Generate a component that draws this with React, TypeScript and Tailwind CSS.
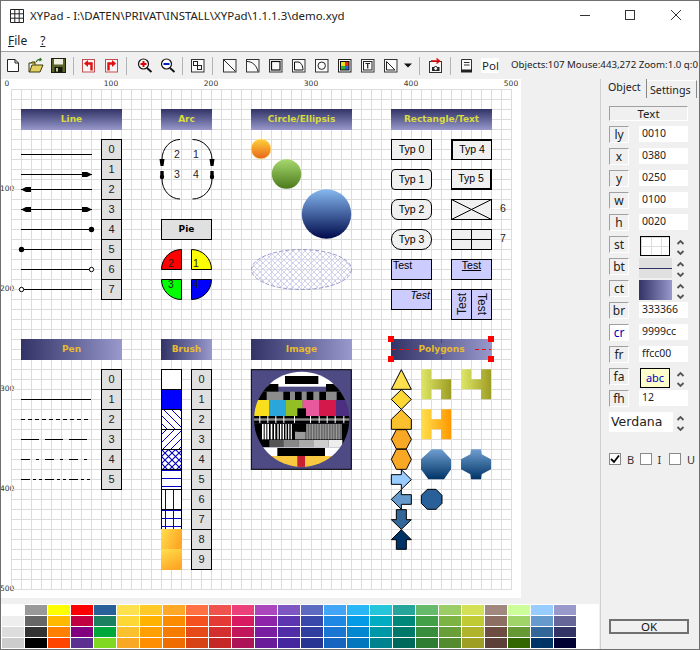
import React from "react";

const SANS = "font-['Noto_Sans',sans-serif]";
const ARIAL = "font-['Liberation_Sans',sans-serif]";
const VERD = "font-['DejaVu_Sans',sans-serif]";

type BoxProps = { x: number; y: number; w: number; h: number; className?: string; children?: React.ReactNode };
function Box({ x, y, w, h, className = "", children }: BoxProps) {
  return (
    <div className={`absolute flex items-center justify-center ${className}`} style={{ left: x, top: y, width: w, height: h }}>
      {children}
    </div>
  );
}

function Header({ x, y, w, label, horiz }: { x: number; y: number; w: number; label: string; horiz?: boolean }) {
  return (
    <Box
      x={x}
      y={y}
      w={w}
      h={21}
      className={`${VERD} pt-px text-[9px] font-bold ${horiz ? "bg-gradient-to-r from-[#333366] to-[#9999cc] text-[#e8bb30]" : "bg-gradient-to-b from-[#333366] to-[#9999cc] text-[#d8dc40]"}`}
    >
      {label}
    </Box>
  );
}

function NumCol({ x, y, n }: { x: number; y: number; n: number }) {
  return (
    <>
      {Array.from({ length: n }).map((_, i) => (
        <Box key={i} x={x} y={y + i * 20} w={21} h={21} className={`border border-black bg-[#e0e0e0] ${ARIAL} text-[11px] text-[#222]`}>
          {i}
        </Box>
      ))}
    </>
  );
}

function Canvas() {
  const typ: [string, number, number, string][] = [
    ["Typ 0", 380, 50, "border border-black"],
    ["Typ 1", 380, 80, "border border-black rounded-[4px]"],
    ["Typ 2", 380, 110, "border border-black rounded-[7px]"],
    ["Typ 3", 380, 140, "border border-black rounded-[10px]"],
    ["Typ 4", 440, 50, "border border-black border-l-2 border-t-2"],
    ["Typ 5", 440, 80, "border border-black border-r-2 border-b-2"],
  ];
  const barsA = [130, 165, 200, 238];
  const stripes = [66, 74, 82, 92, 102, 112, 120, 128, 136, 144, 152];
  const grayStripes = [200, 208, 216, 224, 232, 240, 248, 256, 264, 272, 280, 288, 296];
  return (
    <div className="absolute left-[10px] top-[10px] w-[501px] h-[501px] bg-[linear-gradient(#dcdcdc_1px,transparent_1px),linear-gradient(90deg,#dcdcdc_1px,transparent_1px)] bg-[size:10px_10px]">
      <svg className="absolute left-0 top-0" width="501" height="501" viewBox="0 0 501 501">
        <defs>
          <pattern id="hs" width="8" height="8" patternUnits="userSpaceOnUse">
            <path d="M-1 -1L9 9M-1 7L1 9M7 -1L9 1" stroke="#0000c0" strokeWidth="1" />
          </pattern>
          <pattern id="hb" width="8" height="8" patternUnits="userSpaceOnUse">
            <path d="M9 -1L-1 9M1 -1L-1 1M9 7L7 9" stroke="#0000c0" strokeWidth="1" />
          </pattern>
          <pattern id="hx" width="7" height="7" patternUnits="userSpaceOnUse">
            <path d="M-1 -1L8 8M8 -1L-1 8" stroke="#0000c0" strokeWidth="1.1" />
          </pattern>
          <pattern id="hh" width="8" height="8" patternUnits="userSpaceOnUse">
            <path d="M0 5.5H8" stroke="#0000c0" strokeWidth="1" />
          </pattern>
          <pattern id="hv" width="8" height="8" patternUnits="userSpaceOnUse">
            <path d="M2.5 0V8" stroke="#0000c0" strokeWidth="1" />
          </pattern>
          <pattern id="hc" width="8" height="8" patternUnits="userSpaceOnUse">
            <path d="M2.5 0V8M0 5.5H8" stroke="#0000c0" strokeWidth="1" />
          </pattern>
          <pattern id="ell" width="6" height="6" patternUnits="userSpaceOnUse">
            <path d="M-1 -1L7 7M7 -1L-1 7" stroke="#d2d2ee" strokeWidth="1" />
          </pattern>
          <linearGradient id="gO" x1="0" y1="0" x2="0" y2="1">
            <stop offset="0" stopColor="#ffd23a" />
            <stop offset="1" stopColor="#e5641c" />
          </linearGradient>
          <linearGradient id="gG" x1="0" y1="0" x2="0" y2="1">
            <stop offset="0" stopColor="#a6d86e" />
            <stop offset="1" stopColor="#4c7a1c" />
          </linearGradient>
          <linearGradient id="gB" x1="0" y1="0" x2="0" y2="1">
            <stop offset="0" stopColor="#86b8f0" />
            <stop offset="1" stopColor="#000a4c" />
          </linearGradient>
          <linearGradient id="g8" x1="0" y1="0" x2="1" y2="0.4">
            <stop offset="0" stopColor="#ffe14d" />
            <stop offset="1" stopColor="#ffa726" />
          </linearGradient>
          <linearGradient id="g9" x1="0" y1="0" x2="0.5" y2="1">
            <stop offset="0" stopColor="#ffe14d" />
            <stop offset="1" stopColor="#ffa726" />
          </linearGradient>
          <linearGradient id="gL" x1="0" y1="0" x2="1" y2="0">
            <stop offset="0" stopColor="#dfe866" />
            <stop offset="1" stopColor="#9e9d24" />
          </linearGradient>
          <linearGradient id="gY" x1="0" y1="0" x2="1" y2="0">
            <stop offset="0" stopColor="#ffe14d" />
            <stop offset="1" stopColor="#ff9800" />
          </linearGradient>
          <linearGradient id="gN" x1="0" y1="0" x2="0" y2="1">
            <stop offset="0" stopColor="#6f9fd0" />
            <stop offset="1" stopColor="#003366" />
          </linearGradient>
          <clipPath id="tv">
            <circle cx="185" cy="268" r="143" />
          </clipPath>
        </defs>

        {/* Line group */}
        <g stroke="#000" strokeWidth="1" fill="none">
          {[65, 85, 100, 120, 140, 160, 180, 200].map((y) => (
            <path key={y} d={`M10 ${y + 0.5}H81`} />
          ))}
        </g>
        <g fill="#000">
          <path d="M71 83H76L81 85.5L76 88H71Z" />
          <path d="M20 98H15L10 100.5L15 103H20Z" />
          <path d="M71 118H76L81 120.5L76 123H71Z" />
          <path d="M20 118H15L10 120.5L15 123H20Z" />
          <circle cx="80.5" cy="140.5" r="2.7" />
          <circle cx="10.5" cy="160.5" r="2.7" />
        </g>
        <circle cx="80.5" cy="180.5" r="2.2" fill="#fff" stroke="#000" />
        <circle cx="10.5" cy="200.5" r="2.2" fill="#fff" stroke="#000" />

        {/* Arc group */}
        <g stroke="#000" fill="none">
          <path d="M181.5 50.5A19.5 20 0 0 1 201 70" />
          <path d="M201 90A19.5 20 0 0 1 181.5 110" />
          <path d="M169 50.5A18 20 0 0 0 151 70" />
          <path d="M151 90A18 20 0 0 0 169 110" />
        </g>
        <g fill="#000">
          <path d="M198.5 70H203.5L202.5 77H199.5Z" />
          <path d="M199.3 82H202.7V89H199.3Z" />
          <circle cx="201" cy="88" r="2.2" />
          <path d="M148.5 70H153.5L152.5 77H149.5Z" />
          <path d="M149.3 82H152.7V89H149.3Z" />
          <circle cx="151" cy="88" r="2.2" />
        </g>

        {/* Pie group */}
        <g stroke="#000">
          <path d="M170.5 180.5H150.5A20 20 0 0 1 170.5 160.5Z" fill="#ff0000" />
          <path d="M180.5 180.5V160.5A20 20 0 0 1 200.5 180.5Z" fill="#ffff00" />
          <path d="M170.5 190.5V210.5A20 20 0 0 1 150.5 190.5Z" fill="#00ff00" />
          <path d="M180.5 190.5H200.5A20 20 0 0 1 180.5 210.5Z" fill="#0000ff" />
        </g>

        {/* Circles */}
        <circle cx="250" cy="60" r="10" fill="url(#gO)" stroke="#ffe080" strokeWidth="0.8" />
        <circle cx="275.5" cy="85" r="14.7" fill="url(#gG)" />
        <circle cx="315.5" cy="125" r="24.7" fill="url(#gB)" />
        <ellipse cx="290.5" cy="180.5" rx="50" ry="20" fill="url(#ell)" stroke="#9999cc" strokeDasharray="4 2" />

        {/* Rect cells */}
        <g stroke="#000" fill="#f0f0f0">
          <rect x="440.5" y="110.5" width="40" height="20" />
          <path d="M440.5 110.5L480.5 130.5M480.5 110.5L440.5 130.5" fill="none" />
          <rect x="440.5" y="140.5" width="40" height="20" />
          <path d="M460.5 140.5V160.5M440.5 150.5H480.5" fill="none" />
        </g>

        {/* Pen lines */}
        <g stroke="#000" fill="none">
          <path d="M10 310.5H80" />
          <path d="M10 330.5H80" strokeDasharray="4 3" />
          <path d="M10 350.5H76" strokeDasharray="18 6" />
          <path d="M10 370.5H76" strokeDasharray="9 6 3 6" />
          <path d="M10 390.5H80" strokeDasharray="9 3 3 3 3 3" />
        </g>

        {/* Brush cells */}
        <g stroke="#000">
          <rect x="150.5" y="280.5" width="20" height="20" fill="#fff" />
          <rect x="150.5" y="300.5" width="20" height="20" fill="#0000ff" />
          <rect x="150.5" y="320.5" width="20" height="20" fill="#fff" />
          <rect x="150.5" y="320.5" width="20" height="20" fill="url(#hs)" />
          <rect x="150.5" y="340.5" width="20" height="20" fill="#fff" />
          <rect x="150.5" y="340.5" width="20" height="20" fill="url(#hb)" />
          <rect x="150.5" y="360.5" width="20" height="20" fill="#fff" />
          <rect x="150.5" y="360.5" width="20" height="20" fill="url(#hx)" />
          <rect x="150.5" y="380.5" width="20" height="20" fill="#fff" />
          <rect x="150.5" y="380.5" width="20" height="20" fill="url(#hh)" />
          <rect x="150.5" y="400.5" width="20" height="20" fill="#fff" />
          <rect x="150.5" y="400.5" width="20" height="20" fill="url(#hv)" />
          <rect x="150.5" y="420.5" width="20" height="20" fill="#fff" />
          <rect x="150.5" y="420.5" width="20" height="20" fill="url(#hc)" />
        </g>
        <rect x="150" y="440" width="21" height="20" fill="url(#g8)" />
        <rect x="150" y="460" width="21" height="21" fill="url(#g9)" />

        {/* Test card and polygons in reference-crop units */}
        <g transform="translate(229 241) scale(0.33333)">
          <rect x="34" y="119" width="300" height="299" fill="#4d4a84" stroke="#000" strokeWidth="3" />
          <g clipPath="url(#tv)">
            <rect x="30" y="120" width="310" height="50" fill="#fff" />
            <rect x="135" y="138" width="100" height="24" fill="#000" />
            <rect x="30" y="162" width="85" height="24" fill="#000" />
            <rect x="258" y="162" width="80" height="24" fill="#000" />
            <rect x="30" y="185" width="310" height="25" fill="#8c8c8c" />
            {barsA.map((x) => (
              <rect key={x} x={x} y="185" width="20" height="25" fill="#000" />
            ))}
            <rect x="30" y="185" width="50" height="25" fill="#000" />
            <rect x="290" y="185" width="50" height="25" fill="#000" />
            <rect x="30" y="210" width="58" height="48" fill="#f8de1c" />
            <rect x="88" y="210" width="50" height="48" fill="#2aa6dc" />
            <rect x="138" y="210" width="50" height="48" fill="#94bf24" />
            <rect x="188" y="210" width="50" height="48" fill="#e8589c" />
            <rect x="238" y="210" width="50" height="48" fill="#d4184c" />
            <rect x="288" y="210" width="50" height="48" fill="#4c2f80" />
            <rect x="172" y="235" width="26" height="25" fill="#000" />
            <rect x="30" y="258" width="310" height="22" fill="#000" />
            <rect x="30" y="265" width="310" height="7" fill="#8c8c8c" />
            {[58, 82, 106, 130, 162, 210, 236, 260, 284, 310].map((x) => (
              <rect key={x} x={x} y="258" width="3" height="22" fill="#fff" />
            ))}
            <rect x="30" y="280" width="310" height="50" fill="#000" />
            {stripes.map((x, i) => (
              <rect key={x} x={x} y="282" width={i < 4 ? 5 : 4} height="46" fill={i < 8 ? "#fff" : "#ddd"} />
            ))}
            <rect x="165" y="305" width="32" height="23" fill="#9a9a9a" />
            <rect x="172" y="280" width="26" height="25" fill="#000" />
            <rect x="198" y="282" width="108" height="46" fill="#6a6a6a" />
            {grayStripes.map((x) => (
              <rect key={x} x={x} y="282" width="3" height="46" fill="#9c9c9c" />
            ))}
            <rect x="30" y="330" width="310" height="22" fill="#000" />
            <rect x="88" y="330" width="42" height="22" fill="#555" />
            <rect x="130" y="330" width="45" height="22" fill="#888" />
            <rect x="175" y="330" width="47" height="22" fill="#aaa" />
            <rect x="222" y="330" width="43" height="22" fill="#ccc" />
            <rect x="265" y="330" width="42" height="22" fill="#eee" />
            <rect x="30" y="352" width="310" height="26" fill="#fff" />
            <rect x="112" y="354" width="143" height="24" fill="#000" />
            <rect x="30" y="378" width="310" height="36" fill="#f8c840" />
            <rect x="172" y="378" width="23" height="36" fill="#c81e32" />
          </g>

          <g stroke="#000" strokeWidth="3">
            <path d="M484 119L514 178H454Z" fill="#ffe14d" />
            <path d="M484 179L514 208L484 238L454 208Z" fill="#fdd835" />
            <path d="M484 239L514 268V298H454V268Z" fill="#fbc02d" />
            <path d="M469 299H499L514 328L499 357H469L454 328Z" fill="#f9a825" />
            <path d="M469 358H499L514 388L499 418H469L454 388Z" fill="#f9a825" />
            <path d="M484 419L514 449L484 478V463H454V434H484Z" fill="#99ccff" />
            <path d="M484 479V494H514V523H484V538L454 508Z" fill="#6699cc" />
            <path d="M469 539H499V569H514L484 598L454 569H469Z" fill="#336699" />
            <path d="M484 599L514 629H499V658H469V629H454Z" fill="#003366" />
            <path d="M562 478H588L606 496V520L588 538H562L544 520V496Z" fill="#2a6099" />
          </g>
          <path d="M543 118H573V148H633V208H603V178H573V208H543Z" fill="url(#gL)" />
          <path d="M663 118H693V148H723V118H753V208H723V178H663Z" fill="url(#gL)" />
          <path d="M543 238H573V268H603V238H633V328H603V298H573V328H543Z" fill="url(#gY)" />
          <path d="M575 358H605L633 388V418L612 448H565L543 418V388Z" fill="url(#gN)" />
          <path d="M693 358H723L725 373L753 388V418L725 433L723 448H693L691 433L663 418V388L691 373Z" fill="url(#gN)" />
        </g>
      </svg>

      <Header x={10} y={20} w={101} label="Line" />
      <Header x={150} y={20} w={51} label="Arc" />
      <Header x={240} y={20} w={101} label="Circle/Ellipsis" />
      <Header x={380} y={20} w={101} label="Rectangle/Text" />
      <Header x={10} y={250} w={101} label="Pen" horiz />
      <Header x={150} y={250} w={51} label="Brush" horiz />
      <Header x={240} y={250} w={101} label="Image" horiz />
      <Header x={380} y={250} w={101} label="Polygons" horiz />

      {/* Selection of the Polygons header; the dashes stop short of its text */}
      <svg className="absolute left-0 top-0 pointer-events-none" width="501" height="501" viewBox="0 0 501 501">
        <path d="M381 260.5H408M464 260.5H480M430.5 250V255M430.5 266V270" stroke="#ff0000" strokeDasharray="4 3" fill="none" />
      </svg>

      {[
        [377, 247],
        [477, 247],
        [377, 267],
        [477, 267],
      ].map(([x, y]) => (
        <div key={`${x}-${y}`} className="absolute bg-[#ff0000]" style={{ left: x, top: y, width: 6, height: 6 }} />
      ))}

      <NumCol x={90} y={50} n={8} />
      <NumCol x={90} y={280} n={6} />
      <NumCol x={180} y={280} n={10} />

      <Box x={160} y={60} w={12} h={12} className={`${ARIAL} text-[10.5px] text-[#222]`}>2</Box>
      <Box x={179} y={60} w={12} h={12} className={`${ARIAL} text-[10.5px] text-[#222]`}>1</Box>
      <Box x={160} y={80} w={12} h={12} className={`${ARIAL} text-[10.5px] text-[#222]`}>3</Box>
      <Box x={179} y={80} w={12} h={12} className={`${ARIAL} text-[10.5px] text-[#222]`}>4</Box>

      <Box x={150} y={130} w={51} h={21} className={`border border-black bg-[#e0e0e0] ${VERD} text-[9px] font-bold text-black`}>Pie</Box>

      <Box x={154} y={169} w={12} h={12} className={`${ARIAL} text-[10.5px] text-[#222]`}>2</Box>
      <Box x={179} y={169} w={12} h={12} className={`${ARIAL} text-[10.5px] text-[#222]`}>1</Box>
      <Box x={154} y={190} w={12} h={12} className={`${ARIAL} text-[10.5px] text-[#222]`}>3</Box>
      <Box x={179} y={190} w={12} h={12} className={`${ARIAL} text-[10.5px] text-[#222]`}>4</Box>

      {typ.map(([t, x, y, c]) => (
        <Box key={t} x={x} y={y} w={41} h={21} className={`bg-[#f0f0f0] ${c} ${ARIAL} text-[10.5px] text-black`}>{t}</Box>
      ))}
      <Box x={487} y={114} w={10} h={12} className={`${ARIAL} text-[10.5px] text-[#222]`}>6</Box>
      <Box x={487} y={144} w={10} h={12} className={`${ARIAL} text-[10.5px] text-[#222]`}>7</Box>

      <Box x={380} y={170} w={41} h={21} className={`border border-black bg-[#ccccff] !items-start !justify-start pl-px ${ARIAL} text-[10.5px] leading-[11px] text-black`}>Test</Box>
      <Box x={440} y={170} w={41} h={21} className={`border border-black bg-[#ccccff] !items-start ${ARIAL} text-[10.5px] leading-[11px] text-black underline`}>Test</Box>
      <Box x={380} y={200} w={41} h={21} className={`border border-black bg-[#ccccff] !items-start !justify-end pr-px ${ARIAL} text-[10.5px] leading-[11px] text-black italic`}>Test</Box>
      <Box x={440} y={200} w={21} h={31} className={`border border-black bg-[#ccccff] ${ARIAL} text-[12px] leading-none text-[#111]`}>
        <span className="[writing-mode:vertical-rl] rotate-180">Test</span>
      </Box>
      <Box x={460} y={200} w={21} h={31} className={`border border-black bg-[#ccccff] ${ARIAL} text-[12px] leading-none text-[#111]`}>
        <span className="[writing-mode:vertical-rl]">Test</span>
      </Box>
    </div>
  );
}

const palette: string[][] = [
  ["#ffffff", "#eeeeee", "#dddddd", "#cccccc"],
  ["#999999", "#666666", "#333333", "#000000"],
  ["#ffff00", "#ffb900", "#ff8000", "#ff4500"],
  ["#ff0000", "#c00040", "#800080", "#5c3090"],
  ["#2a6099", "#1a8060", "#00a83c", "#80d820"],
  ["#ffe14d", "#fdd835", "#fbc02d", "#f9a825"],
  ["#ffca28", "#ffb300", "#ffa000", "#ff8f00"],
  ["#ffa726", "#fb8c00", "#f57c00", "#ef6c00"],
  ["#ff7043", "#f4511e", "#e64a19", "#d84315"],
  ["#ef5350", "#e53935", "#d32f2f", "#c62828"],
  ["#ec407a", "#d81b60", "#c2185b", "#ad1457"],
  ["#ab47bc", "#8e24aa", "#7b1fa2", "#6a1b9a"],
  ["#7e57c2", "#5e35b1", "#512da8", "#4527a0"],
  ["#5c6bc0", "#3949ab", "#303f9f", "#283593"],
  ["#42a5f5", "#1e88e5", "#1976d2", "#1565c0"],
  ["#29b6f6", "#039be5", "#0288d1", "#0277bd"],
  ["#26c6da", "#00acc1", "#0097a7", "#00838f"],
  ["#26a69a", "#00897b", "#00796b", "#00695c"],
  ["#66bb6a", "#43a047", "#388e3c", "#2e7d32"],
  ["#9ccc65", "#7cb342", "#689f38", "#558b2f"],
  ["#d4e157", "#c0ca33", "#afb42b", "#9e9d24"],
  ["#a1887f", "#8d6e63", "#6d4c41", "#5d4037"],
  ["#ccff99", "#a0d468", "#669933", "#336600"],
  ["#99ccff", "#6699cc", "#336699", "#003366"],
  ["#9999cc", "#666699", "#333366", "#000033"],
];

function Palette() {
  const cells: string[] = [];
  for (let r = 0; r < 4; r++) for (let c = 0; c < 25; c++) cells.push(palette[c][r]);
  return (
    <div className="h-[45px] w-[598px] bg-white pl-px pt-px">
      <div className="grid grid-cols-[repeat(25,22px)] auto-rows-[10px] gap-px">
        {cells.map((c, i) => (
          <div key={i} style={{ background: c }} />
        ))}
      </div>
    </div>
  );
}

function Sep({ className = "" }: { className?: string }) {
  return <div className={`w-px h-[18px] bg-[#b4b4b4] shrink-0 ${className}`} />;
}

function Icon({ children, className = "" }: { children: React.ReactNode; className?: string }) {
  return (
    <svg width="23" height="23" viewBox="0 0 23 23" className={`shrink-0 ${className}`} fill="none">
      {children}
    </svg>
  );
}

function ToolBox({ children, className = "" }: { children: React.ReactNode; className?: string }) {
  return (
    <Icon className={className}>
      <rect x="5.5" y="5.5" width="12.5" height="12.5" fill="#fafafa" stroke="#333" />
      {children}
    </Icon>
  );
}

function Toolbar() {
  return (
    <div className="flex items-center h-[27px] bg-[#f0f0f0] relative">
      <Icon>
        <path d="M6.5 5.5H14L17.5 9V17.5H6.5Z" fill="#fff" stroke="#222" />
        <path d="M14 5.5V9H17.5" stroke="#222" />
      </Icon>
      <Icon>
        <path d="M5 9V18H16L19 11H8L5.5 18" fill="#e4d060" stroke="#3c3c10" />
        <path d="M5 9H7L8 8H11V11" stroke="#3c3c10" fill="#a8a030" />
        <path d="M12 8C13 6 15 5 17 5.5L16 4M17 5.5L15.5 7" stroke="#2c6e1e" strokeWidth="1.2" />
      </Icon>
      <Icon>
        <rect x="4.5" y="4.5" width="14" height="14" fill="#5a6428" stroke="#1c2008" />
        <rect x="7" y="5" width="9" height="5.5" fill="#f0f0e0" />
        <rect x="7.5" y="13" width="8" height="5.5" fill="#14180a" />
        <rect x="9" y="14" width="2" height="3.5" fill="#c8c8a0" />
      </Icon>
      <Sep className="mx-[3px]" />
      <Icon>
        <rect x="5.5" y="5.5" width="12" height="12.5" fill="#f8f4f4" stroke="#c05050" />
        <path d="M7 9.5L11 6V13Z" fill="#e01010" />
        <path d="M10.5 9.5H14.5V16.5" stroke="#e01010" strokeWidth="2.4" />
      </Icon>
      <Icon>
        <rect x="5.5" y="5.5" width="12" height="12.5" fill="#f8f4f4" stroke="#c05050" />
        <path d="M16 9.5L12 6V13Z" fill="#e01010" />
        <path d="M12.5 9.5H8.5V16.5" stroke="#e01010" strokeWidth="2.4" />
      </Icon>
      <Sep className="mx-[3px]" />
      <Icon className="ml-[3px]">
        <circle cx="10.5" cy="10" r="5" fill="#fff" stroke="#111" strokeWidth="1.2" />
        <path d="M7.5 10H13.5M10.5 7V13" stroke="#e00000" strokeWidth="2" />
        <path d="M14 14L18.5 18" stroke="#111" strokeWidth="1.8" />
      </Icon>
      <Icon>
        <circle cx="10.5" cy="10" r="5" fill="#fff" stroke="#111" strokeWidth="1.2" />
        <path d="M7.5 10H13.5" stroke="#0020c0" strokeWidth="2" />
        <path d="M14 14L18.5 18" stroke="#111" strokeWidth="1.8" />
      </Icon>
      <Sep className="mx-[3px]" />
      <ToolBox>
        <rect x="7.5" y="7.5" width="4" height="4" stroke="#222" />
        <rect x="11.5" y="11.5" width="4" height="4" stroke="#222" />
      </ToolBox>
      <Sep className="mx-[3px]" />
      <ToolBox className="ml-[2px]">
        <path d="M6 6L17.5 17.5" stroke="#222" />
      </ToolBox>
      <ToolBox>
        <path d="M6 7.5C11 7.5 15.5 11 17 17.5" stroke="#222" />
      </ToolBox>
      <ToolBox>
        <rect x="7.5" y="7.5" width="8.5" height="8.5" stroke="#111" strokeWidth="1.2" />
      </ToolBox>
      <ToolBox>
        <path d="M7.5 8H11C14 8 16 12 16 16H7.5Z" stroke="#111" />
      </ToolBox>
      <ToolBox>
        <circle cx="11.7" cy="11.7" r="3.7" stroke="#222" />
      </ToolBox>
      <Icon>
        <rect x="5.5" y="5.5" width="12.5" height="12.5" fill="#fafafa" stroke="#222" />
        <rect x="7" y="7" width="9.5" height="9.5" fill="#111" />
        <rect x="8" y="8" width="4" height="4" fill="#f0e020" />
        <rect x="12" y="8" width="3.5" height="4" fill="#e03020" />
        <rect x="8" y="12" width="4" height="3.5" fill="#30b030" />
        <rect x="12" y="12" width="3.5" height="3.5" fill="#3060e0" />
      </Icon>
      <ToolBox>
        <rect x="7.5" y="7.5" width="8.5" height="8.5" stroke="#222" />
        <path d="M9.5 9.5H14M11.7 9.5V14.5" stroke="#222" strokeWidth="1.2" />
      </ToolBox>
      <ToolBox>
        <path d="M7.5 7.5V16H16Z" stroke="#222" />
      </ToolBox>
      <svg width="10" height="23" viewBox="0 0 10 23" className="ml-[1px] shrink-0">
        <path d="M1 9.5H9L5 13.5Z" fill="#111" />
      </svg>
      <Sep className="ml-[6px] mr-[4px]" />
      <Icon>
        <rect x="5.5" y="7.5" width="12" height="11" fill="#f5f5f5" stroke="#333" />
        <rect x="8" y="13" width="7.5" height="4" fill="#222" />
        <circle cx="11.7" cy="14.5" r="2" fill="#f5f5f5" stroke="#222" />
        <path d="M7 7H15M12.5 4.5L15.5 7L12.5 9.5" stroke="#e00000" strokeWidth="1.3" />
      </Icon>
      <Sep className="ml-[3px] mr-[4px]" />
      <Icon>
        <path d="M6.5 5.5H16.5V17.5H6.5Z" fill="#fafafa" stroke="#333" />
        <path d="M9 8.5H14.5M9 11H14.5" stroke="#333" />
        <rect x="6" y="15.5" width="11" height="3" fill="#222" />
      </Icon>
      <div className={`ml-[3px] w-[18px] h-[15px] bg-white ${SANS} text-[11.5px] leading-[15px] text-[#222] overflow-hidden pl-px`}>Pol</div>
      <div className={`ml-[12px] whitespace-nowrap ${SANS} text-[9.7px] text-[#222]`}>Objects:107 Mouse:443,272 Zoom:1.0 q:0</div>
    </div>
  );
}

function Spin() {
  return (
    <svg width="9" height="19" viewBox="0 0 9 19" className="shrink-0 mt-[2px]" fill="none">
      <path d="M1.5 6L4.5 3L7.5 6" stroke="#555" strokeWidth="1.8" />
      <path d="M1.5 13L4.5 16L7.5 13" stroke="#555" strokeWidth="1.8" />
    </svg>
  );
}

function Label({ t, blue }: { t: string; blue?: boolean }) {
  return (
    <div
      className={`w-[20px] h-[17px] shrink-0 flex items-center justify-center border-l border-t border-l-[#a0a0a0] border-t-[#a0a0a0] border-r border-b border-r-white border-b-white ${SANS} text-[12px] leading-none ${blue ? "bg-white text-[#0000c0]" : "text-[#222]"}`}
    >
      {t}
    </div>
  );
}

function FieldRow({ t, v, blue }: { t: string; v: string; blue?: boolean }) {
  return (
    <div className="flex h-[22px]">
      <Label t={t} blue={blue} />
      <div className={`ml-[10px] w-[49px] h-[16px] bg-white pl-[3px] ${SANS} text-[10.5px] leading-[14px] text-[#222]`}>{v}</div>
    </div>
  );
}

function Check({ label, checked, className = "" }: { label: string; checked?: boolean; className?: string }) {
  return (
    <div className={`flex items-center ${className}`}>
      <div className="w-[12px] h-[12px] bg-white border border-[#8a8a8a]">
        {checked && (
          <svg width="10" height="10" viewBox="0 0 10 10" fill="none">
            <path d="M1 5L4 8L9 1.5" stroke="#000" strokeWidth="1.8" />
          </svg>
        )}
      </div>
      <span className={`ml-[6px] w-[12px] ${SANS} text-[11px] leading-none text-[#333]`}>{label}</span>
    </div>
  );
}

function RightPanel() {
  return (
    <div className="w-[99px] h-full border-l border-[#cfcfcf] bg-[#f0f0f0] pl-[8px] flex flex-col relative">
      <div className="flex h-[19px] -ml-[3px] items-start">
        <div className={`w-[41px] h-[19px] border-r border-[#888] ${SANS} text-[10.7px] leading-[17px] pl-[2px] text-[#222]`}>Object</div>
        <div className={`w-[50px] h-[18px] mt-px border-r border-[#888] border-t border-t-white ${SANS} text-[10.7px] leading-[18px] pl-[3px] text-[#222]`}>Settings</div>
      </div>
      <div className={`mt-[8px] w-[79px] h-[15px] flex items-center justify-center border-l border-t border-l-[#a0a0a0] border-t-[#a0a0a0] border-r border-b border-r-white border-b-white ${SANS} text-[11.5px] leading-none text-[#222]`}>Text</div>
      <div className="mt-[5px]">
        <FieldRow t="ly" v="0010" />
        <FieldRow t="x" v="0380" />
        <FieldRow t="y" v="0250" />
        <FieldRow t="w" v="0100" />
        <FieldRow t="h" v="0020" />
        <div className="flex h-[22px]">
          <Label t="st" />
          <div className="ml-[11px] w-[30px] h-[20px] border border-black bg-white bg-[linear-gradient(#dcdcdc_1px,transparent_1px),linear-gradient(90deg,#dcdcdc_1px,transparent_1px)] bg-[size:10px_9px]" />
          <div className="ml-[6px]"><Spin /></div>
        </div>
        <div className="flex h-[22px]">
          <Label t="bt" />
          <div className="ml-[10px] w-[33px] h-[20px] bg-[#e0e0e0] flex items-center"><div className="w-full h-px bg-[#333366]" /></div>
          <div className="ml-[4px]"><Spin /></div>
        </div>
        <div className="flex h-[22px]">
          <Label t="ct" />
          <div className="ml-[10px] w-[33px] h-[20px] bg-gradient-to-r from-[#333366] to-[#9999cc]" />
          <div className="ml-[4px]"><Spin /></div>
        </div>
        <FieldRow t="br" v="333366" />
        <FieldRow t="cr" v="9999cc" blue />
        <FieldRow t="fr" v="ffcc00" />
        <div className="flex h-[22px]">
          <Label t="fa" />
          <div className={`ml-[11px] w-[30px] h-[20px] border border-black bg-[#ffffcc] flex items-center justify-center ${SANS} text-[11px] text-[#0000c0]`}>abc</div>
          <div className="ml-[6px]"><Spin /></div>
        </div>
        <FieldRow t="fh" v="12" />
      </div>
      <div className="flex h-[20px]">
        <div className={`w-[64px] h-[20px] bg-white pl-[2px] ${VERD} text-[12.5px] leading-[20px] text-[#222]`}>Verdana</div>
        <div className="ml-[3px]"><Spin /></div>
      </div>
      <div className="mt-[21px] flex">
        <Check label="B" checked className="w-[31px]" />
        <Check label="I" className="w-[29px]" />
        <Check label="U" />
      </div>
      <div className={`mt-auto mb-[15px] w-[80px] h-[15px] border-2 border-[#707070] bg-[#f0f0f0] flex items-center justify-center ${SANS} text-[11.5px] leading-none text-[#111]`}>OK</div>
    </div>
  );
}

export default function App() {
  const xRuler = [0, 100, 200, 300, 400, 500];
  const yRuler = [100, 200, 300, 400, 500];
  return (
    <div className="w-[700px] h-[650px] bg-[#f0f0f0] border border-[#707070] flex flex-col overflow-hidden">
      <div className="h-[29px] bg-white flex items-center shrink-0">
        <svg width="14" height="14" viewBox="0 0 14 14" className="ml-[9px] shrink-0" fill="none">
          <path d="M.5 .5H13.5V13.5H.5ZM4.8 .5V13.5M9.2 .5V13.5M.5 4.8H13.5M.5 9.2H13.5" stroke="#222" />
        </svg>
        <div className={`ml-[6px] whitespace-nowrap ${SANS} text-[11.45px] text-[#222]`}>{"XYPad - I:\\DATEN\\PRIVAT\\INSTALL\\XYPad\\1.1.1.3\\demo.xyd"}</div>
        <div className="ml-auto flex items-center">
          <svg width="46" height="29" viewBox="0 0 46 29" fill="none"><path d="M1 14.5H11" stroke="#333" /></svg>
          <svg width="46" height="29" viewBox="0 0 46 29" fill="none"><rect x="0.5" y="9.5" width="9" height="9" stroke="#333" /></svg>
          <svg width="28" height="29" viewBox="0 0 28 29" fill="none"><path d="M0 9L10 19M10 9L0 19" stroke="#333" /></svg>
        </div>
      </div>
      <div className={`h-[21px] bg-white flex items-center shrink-0 ${SANS} text-[12px] text-[#222]`}>
        <span className="ml-[7px]"><span className="underline">F</span>ile</span>
        <span className="ml-[13px] underline">?</span>
      </div>
      <div className="h-px bg-[#a0a0a0] shrink-0" />
      <Toolbar />
      <div className="flex flex-1 min-h-0">
        <div className="w-[599px] flex flex-col">
          <div className="relative w-[520px] h-[519px] bg-white overflow-hidden">
            {xRuler.map((v) => (
              <span key={v} className={`absolute top-0 -translate-x-1/2 ${VERD} text-[7.5px] leading-[10px] text-[#333]`} style={{ left: v + (v ? 10 : 6) }}>{v}</span>
            ))}
            {yRuler.map((v) => (
              <span key={v} className={`absolute -left-[1px] ${VERD} text-[7.5px] leading-[10px] text-[#333]`} style={{ top: v + 5 }}>{v}</span>
            ))}
            <Canvas />
          </div>
          <div className="h-[6px]" />
          <Palette />
        </div>
        <RightPanel />
      </div>
    </div>
  );
}
